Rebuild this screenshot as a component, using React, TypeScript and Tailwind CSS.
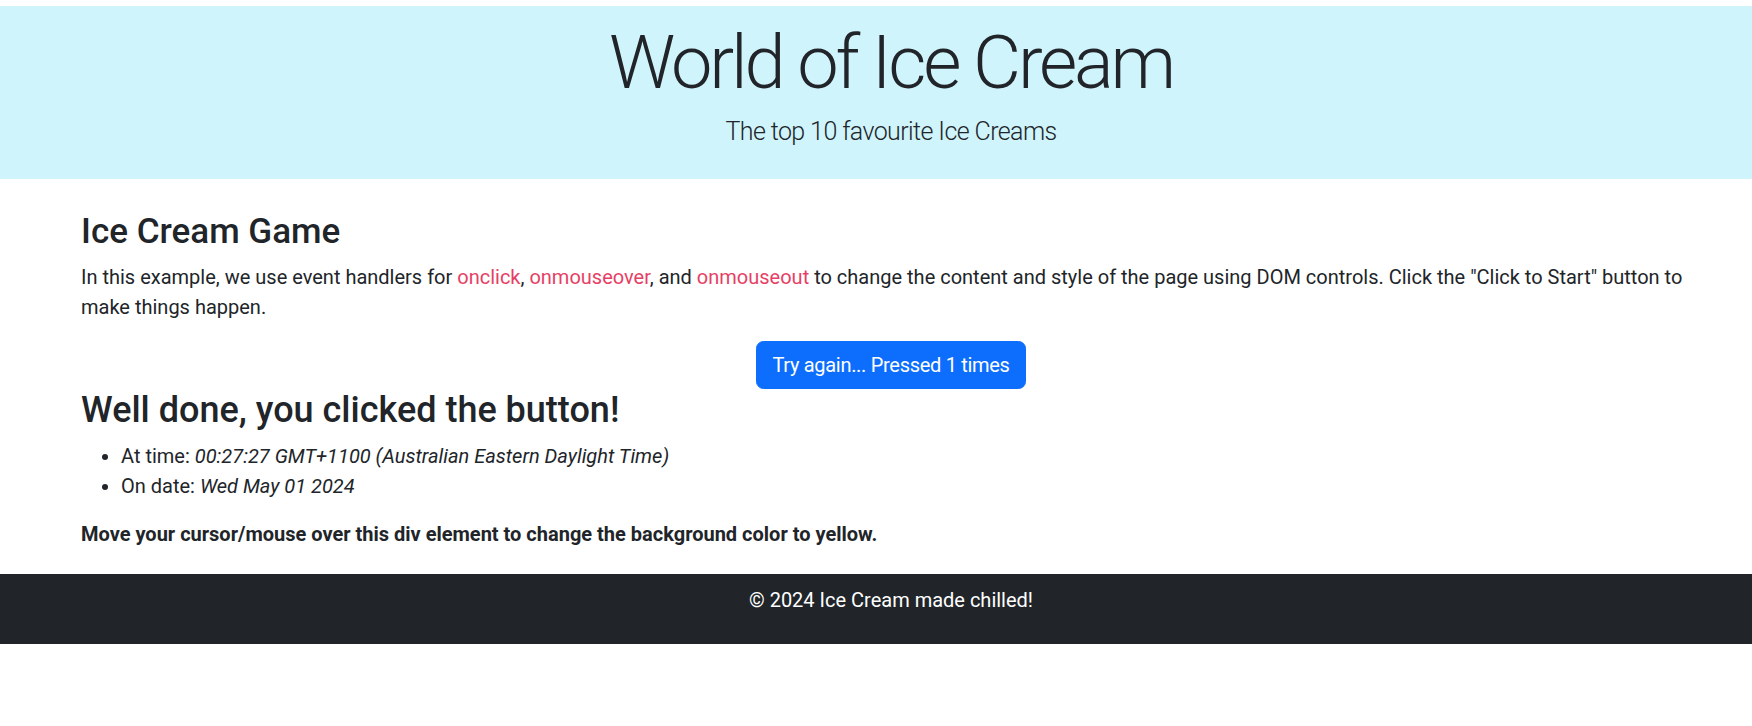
import React from "react";

export default function App() {
  return (
    <div className="overflow-hidden bg-white font-['Roboto',sans-serif] text-[#212529]">
      <div className="w-[1782px] pt-[6px]">
        <header className="bg-[#cff4fc] pt-[9px] pb-[28px] text-center">
          <h1 className="text-[74px] font-light leading-[96px] tracking-[-3.2px]">World of Ice Cream</h1>
          <p className="mt-[2px] text-[25px] font-light leading-[37.5px] tracking-[-0.6px]">
            The top 10 favourite Ice Creams
          </p>
        </header>

        <main className="mx-auto w-[1650px] px-[15px]">
          <h3 className="mt-[32px] text-[35px] font-medium leading-[42px]">Ice Cream Game</h3>
          <p className="mt-[9px] text-[20px] leading-[30px]">
            In this example, we use event handlers for <span className="text-[#e63f66]">onclick</span>,{" "}
            <span className="text-[#e63f66]">onmouseover</span>, and{" "}
            <span className="text-[#e63f66]">onmouseout</span> to change the content and style of the page
            using DOM controls. Click the "Click to Start" button to make things happen.
          </p>
          <div className="mt-[19px] text-center">
            <button
              type="button"
              className="inline-flex h-[48px] items-center rounded-[7.5px] border border-[#0d6efd] bg-[#0d6efd] px-[15px] text-[20px] leading-[30px] tracking-[-0.3px] text-white"
            >
              Try again... Pressed 1 times
            </button>
          </div>
          <h2 className="text-[36px] font-medium leading-[43px]">Well done, you clicked the button!</h2>
          <ul className="mt-[9px] list-disc pl-[40px] text-[20px] leading-[30px]">
            <li>
              At time: <em>00:27:27 GMT+1100 (Australian Eastern Daylight Time)</em>
            </li>
            <li>
              On date: <em>Wed May 01 2024</em>
            </li>
          </ul>
          <p className="mt-[18px] text-[20px] font-bold leading-[30px]">
            Move your cursor/mouse over this div element to change the background color to yellow.
          </p>
        </main>

        <footer className="mt-[25px] h-[70px] bg-[#212529] pt-[11px] text-center text-[20px] leading-[30px] text-white">
          © 2024 Ice Cream made chilled!
        </footer>
      </div>
    </div>
  );
}
